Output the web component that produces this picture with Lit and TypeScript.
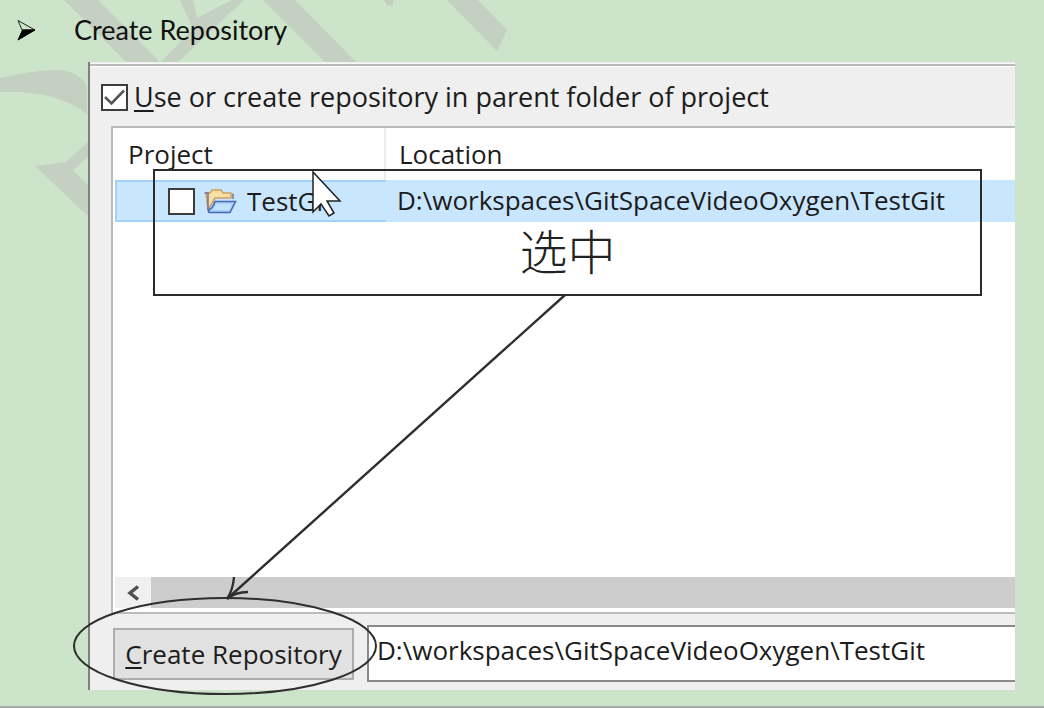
import { LitElement, html, css, svg } from "lit";
import { customElement, property } from "lit/decorators.js";

interface Project {
  name: string;
  location: string;
}

@customElement("repository-dialog")
class RepositoryDialog extends LitElement {
  @property({ attribute: false }) projects: Project[] = [];
  @property() path = "";

  static styles = css`
    :host {
      display: flex;
      flex-direction: column;
      box-sizing: border-box;
      padding: 1px 0 8px 21px;
      border-left: 2px solid #7c827d;
      background: #efefef;
      color: #1c1c1c;
      font: 26px/32px "Open Sans", "Noto Sans", sans-serif;
    }
    .rule {
      height: 2px;
      margin-left: -21px;
      border-top: 1px solid #f8f8f8;
      border-bottom: 1px solid #fff;
      background: #b9b9b9;
    }
    .option {
      display: flex;
      align-items: center;
      gap: 6px;
      margin: 14px 0 13px -10px;
      font-size: 27px;
    }
    .tick {
      display: grid;
    }
    .tick > * {
      grid-area: 1 / 1;
    }
    .tick svg {
      width: 27px;
      height: 27px;
      pointer-events: none;
      visibility: hidden;
    }
    input:checked + svg {
      visibility: visible;
    }
    .box {
      appearance: none;
      flex: none;
      width: 27px;
      height: 27px;
      margin: 0;
      border: 2px solid #3c3c3c;
      background: #fff;
    }
    .list {
      flex: 1;
      display: flex;
      flex-direction: column;
      border: solid #b9bbbd;
      border-width: 2px 0 2px 2px;
      background: #fff;
      padding: 0 0 4px 2px;
    }
    table {
      width: 100%;
      border-collapse: separate;
      border-spacing: 0;
      table-layout: fixed;
    }
    .first {
      width: 271px;
    }
    th,
    td {
      box-sizing: border-box;
      padding: 0 0 0 13px;
      font-weight: 400;
      text-align: left;
      white-space: nowrap;
    }
    th {
      height: 52px;
    }
    th:first-child {
      border-right: 2px solid #ececec;
    }
    td {
      height: 42px;
      padding: 0 0 2px 11px;
      background: #c9e6ff;
    }
    td:first-child {
      padding: 0 0 0 51px;
      border: solid #9fd3fb;
      border-width: 2px 0 2px 2px;
    }
    .item {
      display: flex;
      align-items: center;
    }
    .item svg {
      width: 34px;
      height: 28px;
      margin: 0 10px 0 8px;
    }
    .scroll {
      display: flex;
      height: 31px;
      margin-top: auto;
      background: #cdcdcd;
    }
    .back {
      display: grid;
      place-items: center;
      width: 36px;
      padding: 0;
      border: 0;
      background: #f0f0f0;
    }
    .actions {
      display: flex;
      align-items: center;
      gap: 13px;
      margin-top: 11px;
      padding-left: 2px;
    }
    .create {
      flex: none;
      width: 241px;
      height: 52px;
      padding: 0;
      border: 2px solid #adadad;
      background: #e1e1e1;
      color: inherit;
      font: inherit;
      white-space: nowrap;
    }
    .path {
      flex: 1;
      min-width: 0;
      box-sizing: border-box;
      height: 57px;
      padding: 0 0 8px 8px;
      border: solid #8a8a8a;
      border-width: 2px 0 2px 2px;
      border-radius: 0;
      background: #fff;
      color: inherit;
      font: inherit;
    }
    u {
      text-decoration-thickness: 2px;
      text-underline-offset: 3px;
    }
  `;

  render() {
    return html`
      <div class="rule"></div>
      <div class="option">
        <span class="tick">
          <input class="box" id="parent" type="checkbox" checked />
          <svg viewBox="0 0 27 27" aria-hidden="true">
            <path d="M4 13 10.500 19.500 23 6.500" fill="none" stroke="#555" stroke-width="2.600" />
          </svg>
        </span>
        <label for="parent"><u>U</u>se or create repository in parent folder of project</label>
      </div>
      <div class="list">
        <table>
          <thead>
            <tr>
              <th class="first">Project</th>
              <th>Location</th>
            </tr>
          </thead>
          <tbody>
            ${this.projects.map(
              (p) => html`<tr>
                <td>
                  <label class="item">
                    <input class="box" type="checkbox" />
                    <svg viewBox="0 0 34 28" aria-hidden="true">
                      <path d="M3 6h4l2-3h9l2 3h8v5H12L5 23z" fill="#f9dfa2" stroke="#c9a064" stroke-width="1.500" />
                      <path d="M1.500 6H5v17M30 6.500V12" fill="none" stroke="#76739c" stroke-width="1.500" />
                      <path d="M12 14.500h20.500L27 25.500H6L5.500 23q4-1 6.500-8.500z" fill="#a9d3fa" stroke="#4968b0" stroke-width="1.600" />
                      <path d="M14 17h15l-3 6H10z" fill="#c4e3ff" />
                    </svg>
                    ${p.name}
                  </label>
                </td>
                <td>${p.location}</td>
              </tr>`
            )}
          </tbody>
        </table>
        <div class="scroll">
          <button class="back" aria-label="Scroll left">
            <svg width="16" height="18" viewBox="0 0 16 18">
              <path d="M13 2.500 5 9l8 6.500" fill="none" stroke="#505050" stroke-width="3.500" />
            </svg>
          </button>
        </div>
      </div>
      <div class="actions">
        <button class="create"><u>C</u>reate Repository</button>
        <input class="path" type="text" aria-label="Repository path" .value=${this.path} />
      </div>
    `;
  }
}

@customElement("app-root")
class AppRoot extends LitElement {
  static styles = css`
    :host {
      display: flex;
      flex-direction: column;
      position: relative;
      box-sizing: border-box;
      min-height: 100vh;
      overflow: hidden;
      border-bottom: 2px solid #a5aca6;
      background: #cce4ca;
    }
    .heading {
      position: relative;
      display: flex;
      align-items: center;
      gap: 36px;
      margin: 0;
      padding: 14px 0 16px 17px;
      color: #111;
      font: 400 27px/32px Lato, sans-serif;
    }
    .bullet {
      width: 21px;
      height: 22px;
    }
    repository-dialog {
      position: relative;
      flex: 1;
      margin: 0 29px 16px 88px;
    }
    .watermark,
    .marks {
      position: absolute;
      top: 0;
      left: 0;
      pointer-events: none;
    }
    .note {
      position: absolute;
      box-sizing: border-box;
      top: 169px;
      left: 153px;
      width: 829px;
      height: 127px;
      padding-top: 46px;
      border: 2px solid #2b2b2b;
      color: #222;
      font: 300 48px/64px "Noto Sans CJK SC", sans-serif;
      text-align: center;
      pointer-events: none;
    }
  `;

  render() {
    return html`
      <svg class="watermark" width="520" height="240" viewBox="0 0 520 240" aria-hidden="true">
        <g fill="#c4d0c1">
          <path d="M64 0h34l62 62h-34z" />
          <path d="M180 0h13l4 18L232 0h12l-66 62h-17l32-33z" />
          <path d="M263 0h32l61 62h-31z" />
          <path d="M384 0h9v6l-6-1z" />
          <path d="M447 0h31l29 30-10 21z" />
          <path d="M0 78q36-8 55-8 24 0 32 17v27Q56 90 0 92z" />
          <path d="M88 142v30l-15-2 15 14v32L35 166l31-4z" />
          <path d="M73 170 88 157v28z" fill="#cce4ca" />
        </g>
      </svg>
      <h1 class="heading">
        <svg class="bullet" viewBox="0 0 21 22" aria-hidden="true">
          <path d="M1 1.500 18 11 5 11z" fill="none" stroke="#222" />
          <path d="M5.500 11H18L1 21z" fill="#000" stroke="#000" />
        </svg>
        Create Repository
      </h1>
      <repository-dialog
        .projects=${[{ name: "TestGit", location: "D:\\workspaces\\GitSpaceVideoOxygen\\TestGit" }]}
        path="D:\\workspaces\\GitSpaceVideoOxygen\\TestGit"
      ></repository-dialog>
      <div class="note">选中</div>
      <svg class="marks" width="1044" height="708" viewBox="0 0 1044 708" aria-hidden="true">
        ${svg`
          <g fill="none" stroke="#2e2e2e" stroke-width="2">
            <path d="M565 295 228 598" stroke-width="2.400" />
            <path d="M234 577Q233 590 227 599 235 592 248 592" stroke-width="2.400" />
            <ellipse cx="225" cy="646" rx="151" ry="48" />
          </g>
          <path d="M313 172v40l8-8 8 12 5-3-7-12h13z" fill="#fff" stroke="#222" stroke-width="1.500" />
        `}
      </svg>
    `;
  }
}
